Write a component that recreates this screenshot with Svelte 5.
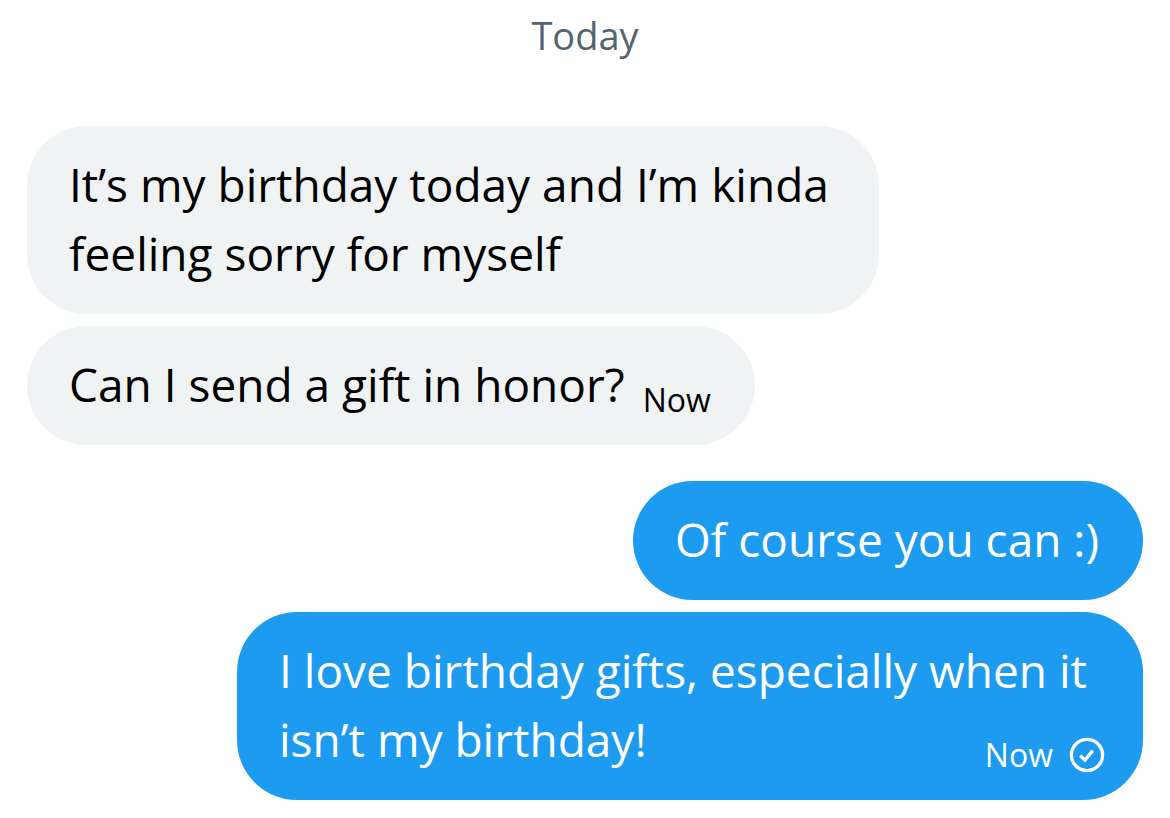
<script>
    const groups = [
        {
            side: 'received',
            messages: [
                { text: 'It’s my birthday today and I’m kinda feeling sorry for myself' },
                { text: 'Can I send a gift in honor?', time: 'Now' }
            ]
        },
        {
            side: 'sent',
            messages: [
                { text: 'Of course you can :)' },
                { text: 'I love birthday gifts, especially when it isn’t my birthday!', time: 'Now', delivered: true }
            ]
        }
    ];
</script>

<main class="chat">
    <h1 class="day">Today</h1>

    {#each groups as group}
        <section class="group {group.side}">
            {#each group.messages as message}
                <p class="bubble">
                    {message.text}
                    {#if message.time}
                        <span class="meta">
                            <time>{message.time}</time>
                            {#if message.delivered}
                                <svg class="check" viewBox="0 0 36 36" role="img" aria-label="Delivered">
                                    <circle cx="18" cy="18" r="15.6" />
                                    <path d="M11.2 18.6l4.8 4.4 7.8-9.4" />
                                </svg>
                            {/if}
                        </span>
                    {/if}
                </p>
            {/each}
        </section>
    {/each}
</main>

<style>
    :global(body) {
        margin: 0;
        background: #fff;
    }

    .chat {
        display: flex;
        flex-direction: column;
        gap: 36px;
        padding: 11px 27px 18px;
        font-family: 'Open Sans', 'Noto Sans', sans-serif;
    }

    .day {
        margin: 0 0 31px;
        font-size: 38px;
        line-height: 48px;
        font-weight: 400;
        text-align: center;
        color: #536471;
    }

    .group {
        display: flex;
        flex-direction: column;
        align-items: flex-start;
        gap: 12px;
    }

    .sent {
        align-items: flex-end;
    }

    .bubble {
        box-sizing: border-box;
        max-width: 852px;
        margin: 0;
        padding: 24px 44px 26px 42px;
        border-radius: 60px;
        background: #eff3f4;
        color: #000;
        font-size: 46px;
        line-height: 69px;
    }

    .sent .bubble {
        max-width: 906px;
        background: #1d9bf0;
        color: #fff;
    }

    /* drops to the end of the last line, just under the text's baseline */
    .meta {
        float: right;
        display: flex;
        align-items: center;
        gap: 16px;
        margin-left: 18px;
        padding-top: 30px;
        font-size: 32px;
        line-height: 39px;
    }

    .sent .meta {
        margin-right: -6px;
    }

    .check {
        width: 36px;
        height: 36px;
        fill: none;
        stroke: currentColor;
        stroke-width: 3.3;
    }
</style>
